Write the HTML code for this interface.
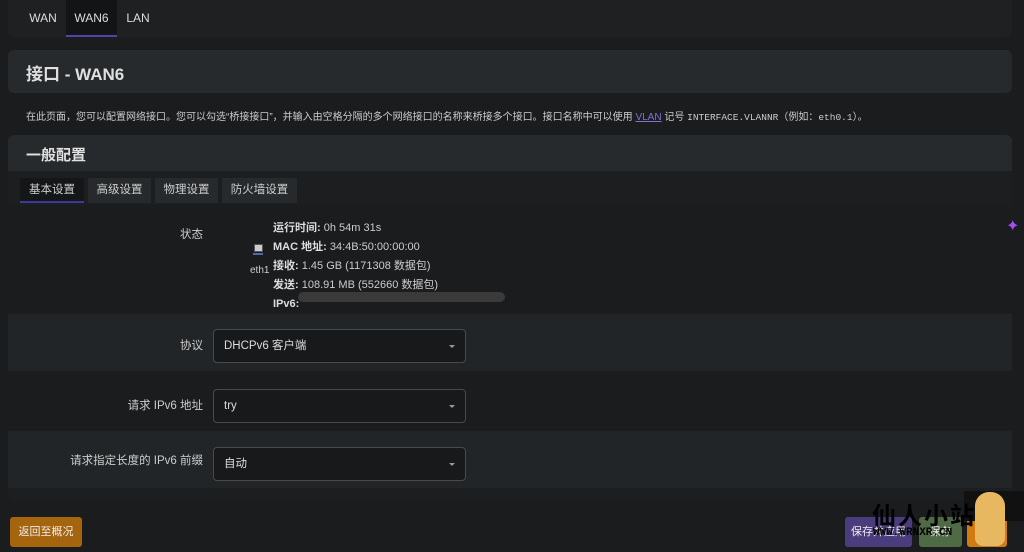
<!DOCTYPE html>
<html><head><meta charset="utf-8"><style>
*{margin:0;padding:0;box-sizing:border-box}
body{width:1024px;height:552px;overflow:hidden;background:#1a1c1e;font-family:"Liberation Sans","Noto Sans CJK SC",sans-serif;color:#d8d8d8;position:relative;font-size:12px}
.abs{position:absolute}
.tabbar{left:8px;top:0;width:1004px;height:37px;background:#1e2022;border-radius:0 0 6px 6px}
.tab{position:absolute;top:0;height:37px;line-height:37px;font-size:12px;color:#ddd;text-align:center}
.hdr{left:8px;top:50px;width:1004px;height:43px;background:#272a2c;border-radius:6px}
.hdr span{position:absolute;left:18px;top:10px;font-size:17px;font-weight:bold;color:#e0e0e0}
.desc{left:26px;top:108px;font-size:10px;color:#ccc;white-space:nowrap}
.sec{left:8px;top:135px;width:1004px;height:365px;background:#1c1e20;border-radius:6px;overflow:hidden}
.sechd{left:0;top:0;width:1004px;height:36px;background:#272a2c}
.sechd span{position:absolute;left:18px;top:9px;font-size:15px;font-weight:bold;color:#e0e0e0}
.st{position:absolute;top:43px;height:25px;line-height:24px;background:#262a2c;font-size:11.5px;color:#ccc;text-align:center}
.row{position:absolute;left:0;width:1004px}
.lbl{position:absolute;right:809px;font-size:11.5px;color:#ccc;white-space:nowrap}
.sel{position:absolute;left:205px;width:253px;height:34px;border:1px solid #4a4a48;border-radius:4px;background:#17191b;font-size:11.5px;color:#ddd;line-height:32px;padding-left:10px}
.sel:after{content:"";position:absolute;right:10px;top:15px;border:3px solid transparent;border-top:3px solid #999}
.info{left:273px;top:219px;font-size:11px;line-height:19px;color:#ccc}
.info b{color:#ddd}
.btn{position:absolute;top:517px;height:30px;border-radius:3px;font-size:11px;color:#eee;line-height:30px;text-align:center}
</style></head><body>
<div class="abs tabbar"></div>
<div class="tab" style="left:28px;width:30px">WAN</div>
<div class="tab" style="left:66px;width:51px;background:#131416;border-bottom:2px solid #5044a8">WAN6</div>
<div class="tab" style="left:124px;width:28px">LAN</div>
<div class="abs hdr"><span>接口 - WAN6</span></div>
<div class="abs desc">在此页面，您可以配置网络接口。您可以勾选“桥接接口”，并输入由空格分隔的多个网络接口的名称来桥接多个接口。接口名称中可以使用 <span style="color:#7d74d6;text-decoration:underline">VLAN</span> 记号 <span style="font-family:'Liberation Mono',monospace;font-size:9.5px">INTERFACE.VLANNR</span>（例如：<span style="font-family:'Liberation Mono',monospace;font-size:9.5px">eth0.1</span>）。</div>
<div class="abs sec">
 <div class="abs sechd"><span>一般配置</span></div>
 <div class="st" style="left:12px;width:64px;background:#151618;border-bottom:2px solid #3b3a9a">基本设置</div>
 <div class="st" style="left:80px;width:63px">高级设置</div>
 <div class="st" style="left:147px;width:63px">物理设置</div>
 <div class="st" style="left:214px;width:75px">防火墙设置</div>
 <div class="row" style="top:70px;height:108px;background:#1a1c1e"></div>
 <div class="lbl" style="top:91px">状态</div>
 <div class="row" style="top:179px;height:57px;background:#222527"><div class="lbl" style="top:23px">协议</div><div class="sel" style="top:15px">DHCPv6 客户端</div></div>
 <div class="row" style="top:236px;height:60px;background:#1a1c1e"><div class="lbl" style="top:26px">请求 IPv6 地址</div><div class="sel" style="top:18px">try</div></div>
 <div class="row" style="top:296px;height:57px;background:#222527"><div class="lbl" style="top:21px">请求指定长度的 IPv6 前缀</div><div class="sel" style="top:16px">自动</div></div>
</div>
<div class="abs" style="left:254px;top:244px;width:9px;height:8px;background:#ccc;border:1px solid #555"></div>
<div class="abs" style="left:253px;top:253px;width:10px;height:2px;background:#4a6aa8"></div>
<div class="abs" style="left:250px;top:265px;font-size:10px;color:#ccc">eth1</div>
<div class="abs info"><b>运行时间:</b> 0h 54m 31s<br><b>MAC 地址:</b> 34:4B:50:00:00:00<br><b>接收:</b> 1.45 GB (1171308 数据包)<br><b>发送:</b> 108.91 MB (552660 数据包)<br><b>IPv6:</b></div>
<div class="abs" style="left:298px;top:292px;width:207px;height:10px;background:#3a3a3a;border-radius:5px"></div>
<div class="abs" style="left:1006px;top:216px;color:#a24ff0;font-size:16px">✦</div>
<div class="btn" style="left:10px;width:72px;background:#a5650f">返回至概况</div>
<div class="btn" style="left:845px;width:67px;background:#4b3d7d">保存并应用</div>
<div class="btn" style="left:919px;width:43px;background:#4e6b45">保存</div>
<div class="btn" style="left:967px;width:40px;background:#d27a12"></div>
<div class="abs" style="left:964px;top:491px;width:60px;height:30px;background:#111"></div>
<div class="abs" style="left:975px;top:492px;width:30px;height:54px;background:#e8b860;border-radius:14px 14px 8px 8px"></div>
<div class="abs" style="left:872px;top:496px;font-size:24px;font-weight:bold;color:#000;letter-spacing:2px">仙人小站</div>
<div class="abs" style="left:873px;top:527px;font-size:11px;font-weight:bold;color:#000;font-family:'Liberation Mono',monospace">WWW.WRNXR.CN</div>
</body></html>
